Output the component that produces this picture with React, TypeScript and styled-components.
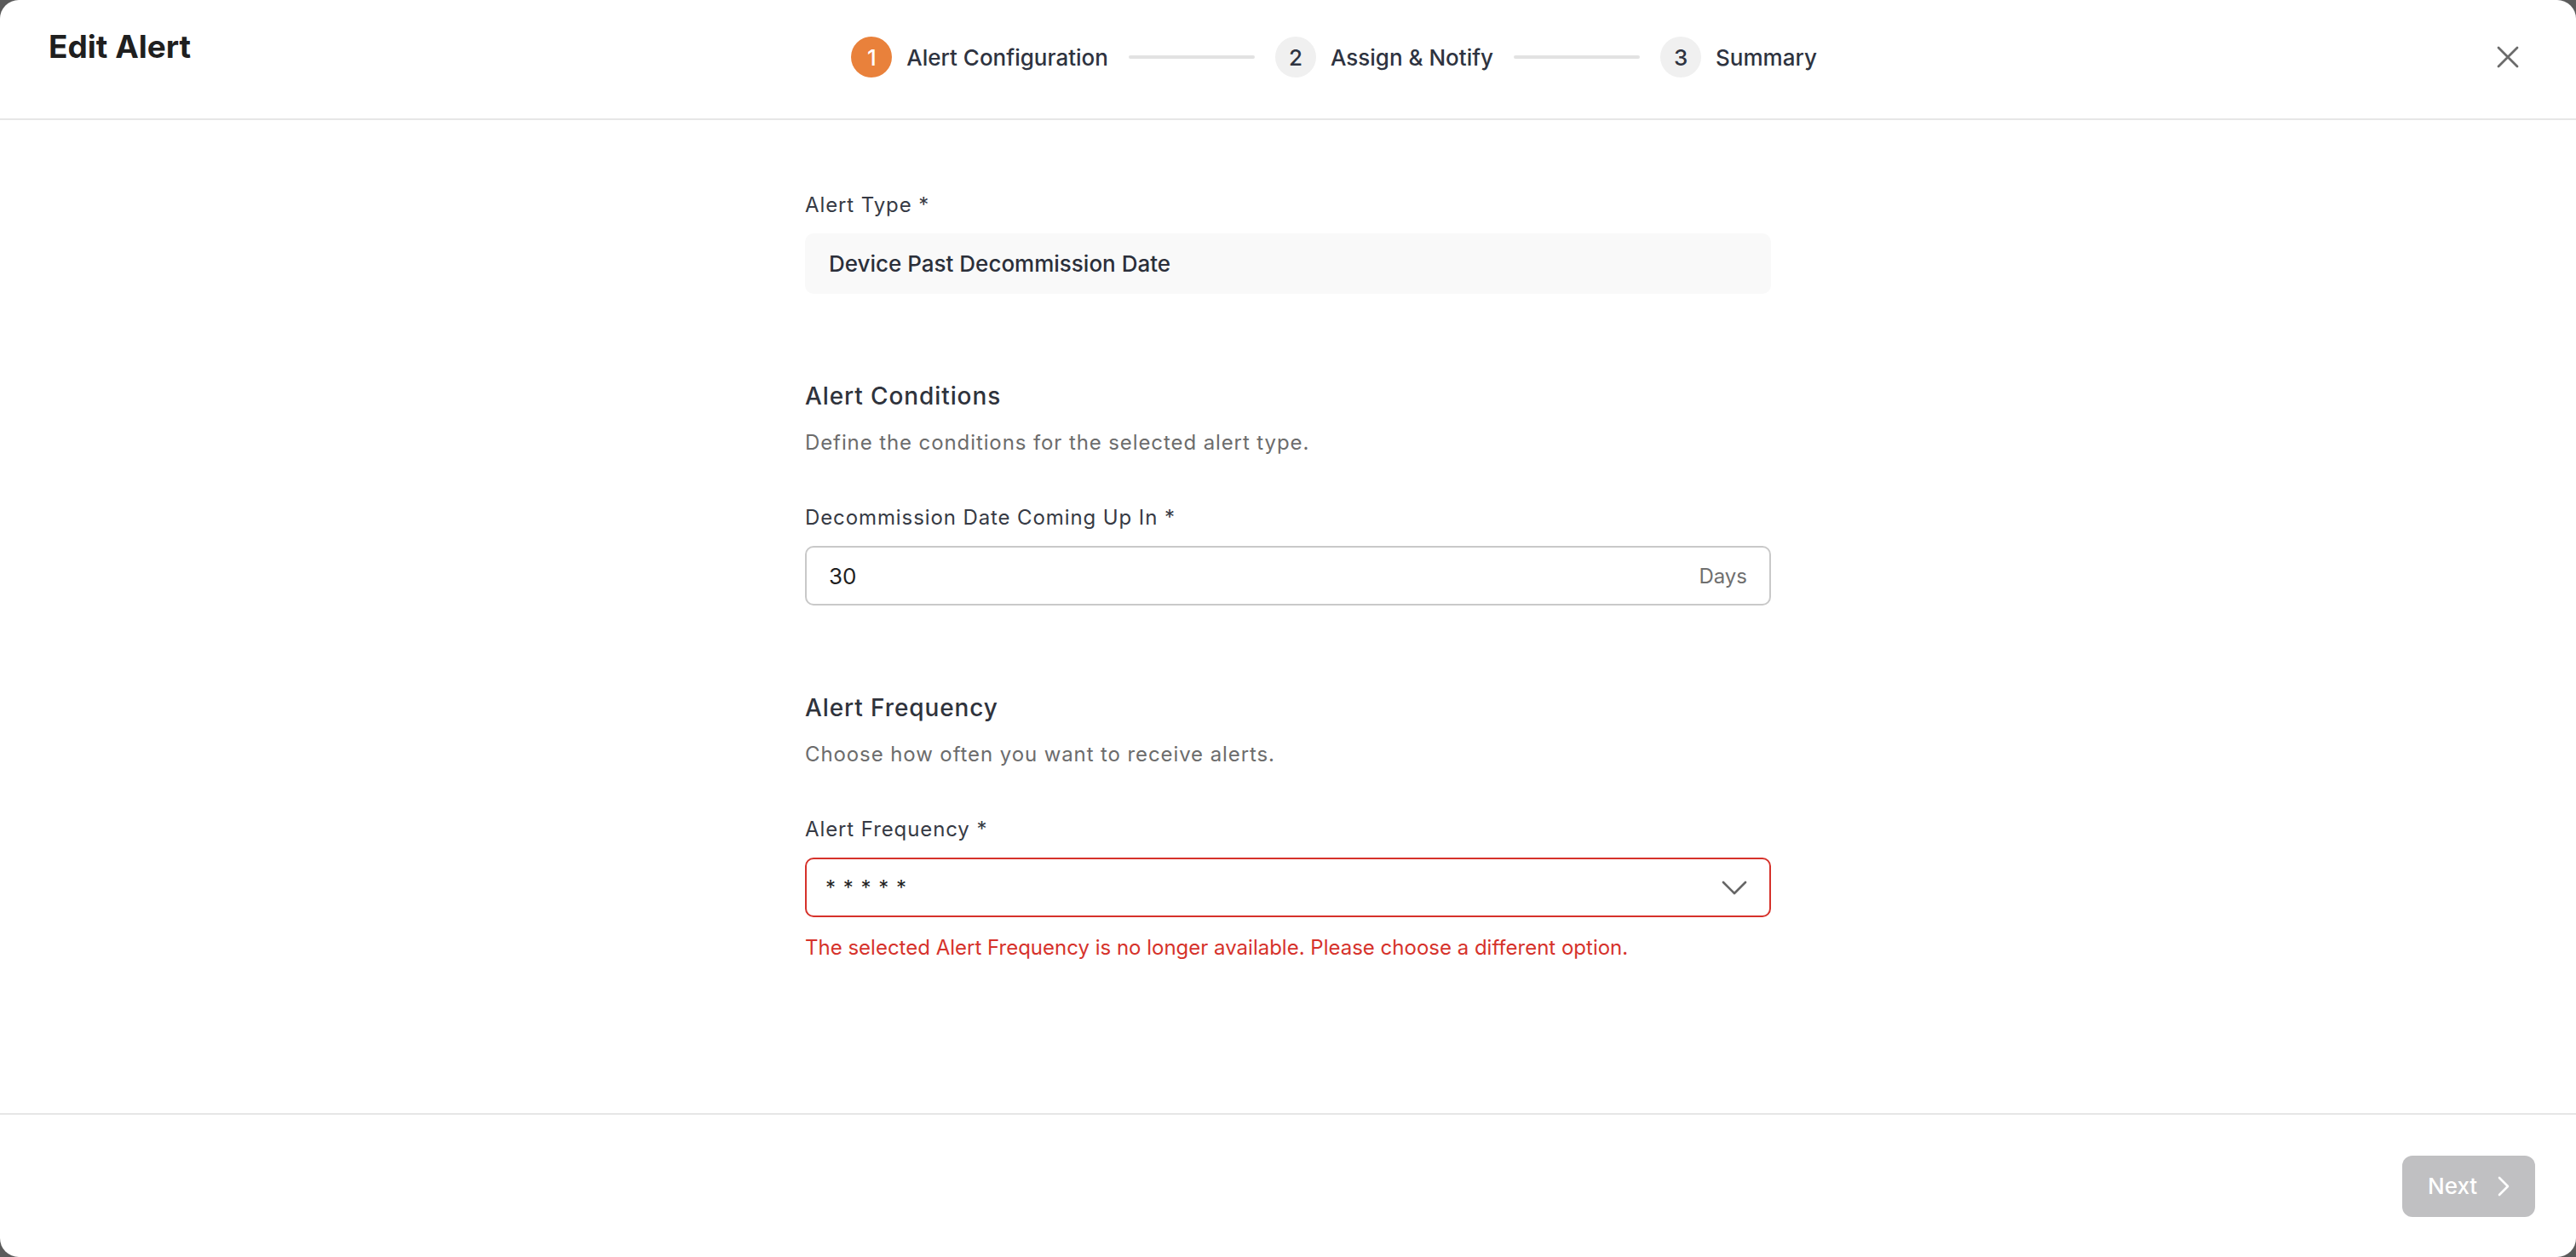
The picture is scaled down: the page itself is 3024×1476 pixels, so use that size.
import React from "react";
import styled, { createGlobalStyle } from "styled-components";

const GlobalStyle = createGlobalStyle`
  * { box-sizing: border-box; }
  html, body {
    margin: 0;
    padding: 0;
    background: #5b5b5b;
    font-family: Inter, "Noto Sans", "Liberation Sans", sans-serif;
    -webkit-font-smoothing: antialiased;
  }
`;

const Modal = styled.div`
  width: 100vw;
  height: 100vh;
  background: #ffffff;
  border-radius: 22px;
  display: flex;
  flex-direction: column;
  overflow: hidden;
`;

const Header = styled.header`
  flex: 0 0 141px;
  display: flex;
  align-items: flex-start;
  justify-content: space-between;
  padding: 33px 48px 0 57px;
  border-bottom: 2px solid #e6e6e6;
`;

const Title = styled.h1`
  margin: 0;
  font-size: 37px;
  line-height: 44px;
  font-weight: 700;
  color: #1f1f1f;
`;

const Stepper = styled.nav`
  display: flex;
  align-items: center;
  gap: 24px;
  margin-top: 10px;
  margin-left: -4px;
`;

const Step = styled.div`
  display: flex;
  align-items: center;
  gap: 17px;
`;

const StepDot = styled.span<{ $active?: boolean }>`
  width: 48px;
  height: 48px;
  border-radius: 50%;
  display: flex;
  align-items: center;
  justify-content: center;
  font-size: 26px;
  font-weight: 500;
  background: ${(p) => (p.$active ? "#e9813b" : "#f0f0f0")};
  color: ${(p) => (p.$active ? "#ffffff" : "#2e3340")};
`;

const StepLabel = styled.span`
  font-size: 26px;
  font-weight: 500;
  color: #2e3340;
`;

const Connector = styled.span`
  width: 148px;
  height: 4px;
  border-radius: 2px;
  background: #e2e2e2;
`;

const CloseButton = styled.button`
  width: 64px;
  height: 48px;
  margin-top: 10px;
  border: none;
  background: transparent;
  display: flex;
  align-items: center;
  justify-content: center;
  padding: 0;
  cursor: pointer;
`;

const Body = styled.main`
  flex: 1;
  display: flex;
  justify-content: center;
  padding-top: 82px;
`;

const Form = styled.div`
  width: 1134px;
  display: flex;
  flex-direction: column;
`;

const Section = styled.section`
  display: flex;
  flex-direction: column;
  & + & {
    margin-top: 102px;
  }
`;

const SectionTitle = styled.h2`
  margin: 0;
  font-size: 28px;
  line-height: 36px;
  font-weight: 500;
  letter-spacing: 0.9px;
  color: #2f333c;
`;

const SectionHint = styled.p`
  margin: 21px 0 54px;
  font-size: 24px;
  line-height: 32px;
  letter-spacing: 0.9px;
  color: #6c6c6c;
`;

const Label = styled.label`
  padding-top: 2px;
  font-size: 24px;
  line-height: 32px;
  letter-spacing: 0.9px;
  color: #363a44;
  margin-bottom: 17px;
  &::after {
    content: " *";
  }
`;

const ReadOnlyField = styled.div`
  height: 71px;
  border-radius: 10px;
  background: #f9f9f9;
  display: flex;
  align-items: center;
  padding: 0 28px;
  font-size: 26px;
  font-weight: 500;
  color: #2b2f3a;
`;

const InputBox = styled.div<{ $error?: boolean }>`
  height: 70px;
  border-radius: 10px;
  border: 2px solid ${(p) => (p.$error ? "#d6322b" : "#c9c9c9")};
  display: flex;
  align-items: center;
  justify-content: space-between;
  padding: 0 26px 0 26px;
  font-size: 26px;
  color: #1f1f1f;
`;

const Suffix = styled.span`
  font-size: 24px;
  color: #6f6f6f;
`;

const Masked = styled.span`
  font-size: 24px;
  color: #1f1f1f;
  letter-spacing: 1px;
  margin-left: -4px;
`;

const ErrorText = styled.p`
  margin: 20px 0 0;
  font-size: 24px;
  line-height: 32px;
  color: #d6322b;
`;

const Footer = styled.footer`
  flex: 0 0 169px;
  border-top: 2px solid #e6e6e6;
  display: flex;
  align-items: center;
  justify-content: flex-end;
  padding: 0 48px;
`;

const NextButton = styled.button`
  width: 156px;
  height: 72px;
  border: none;
  border-radius: 12px;
  background: #c0c0c2;
  color: #ffffff;
  font-family: inherit;
  font-size: 26px;
  font-weight: 500;
  display: flex;
  align-items: center;
  justify-content: space-between;
  padding: 0 30px;
`;

const CloseIcon = () => (
  <svg width="26" height="26" viewBox="0 0 26 26" fill="none">
    <path d="M2 2 L24 24 M24 2 L2 24" stroke="#6b6b6b" strokeWidth="2.8" strokeLinecap="round" />
  </svg>
);

const ChevronDown = () => (
  <svg width="30" height="17" viewBox="0 0 30 17" fill="none">
    <path d="M2 2 L15 15 L28 2" stroke="#666666" strokeWidth="2.6" strokeLinecap="round" strokeLinejoin="round" />
  </svg>
);

const ChevronRight = () => (
  <svg width="14" height="24" viewBox="0 0 14 24" fill="none">
    <path d="M2 2 L12 12 L2 22" stroke="#ffffff" strokeWidth="2.6" strokeLinecap="round" strokeLinejoin="round" />
  </svg>
);

const steps = ["Alert Configuration", "Assign & Notify", "Summary"];

export default function App() {
  return (
    <>
      <GlobalStyle />
      <Modal>
        <Header>
          <Title>Edit Alert</Title>
          <Stepper>
            {steps.map((label, i) => (
              <React.Fragment key={label}>
                {i > 0 && <Connector />}
                <Step>
                  <StepDot $active={i === 0}>{i + 1}</StepDot>
                  <StepLabel>{label}</StepLabel>
                </Step>
              </React.Fragment>
            ))}
          </Stepper>
          <CloseButton aria-label="Close">
            <CloseIcon />
          </CloseButton>
        </Header>

        <Body>
          <Form>
            <Section>
              <Label>Alert Type</Label>
              <ReadOnlyField>Device Past Decommission Date</ReadOnlyField>
            </Section>

            <Section>
              <SectionTitle>Alert Conditions</SectionTitle>
              <SectionHint>Define the conditions for the selected alert type.</SectionHint>
              <Label>Decommission Date Coming Up In</Label>
              <InputBox>
                <span>30</span>
                <Suffix>Days</Suffix>
              </InputBox>
            </Section>

            <Section>
              <SectionTitle>Alert Frequency</SectionTitle>
              <SectionHint>Choose how often you want to receive alerts.</SectionHint>
              <Label>Alert Frequency</Label>
              <InputBox $error>
                <Masked>* * * * *</Masked>
                <ChevronDown />
              </InputBox>
              <ErrorText>
                The selected Alert Frequency is no longer available. Please choose a different option.
              </ErrorText>
            </Section>
          </Form>
        </Body>

        <Footer>
          <NextButton disabled>
            Next
            <ChevronRight />
          </NextButton>
        </Footer>
      </Modal>
    </>
  );
}
